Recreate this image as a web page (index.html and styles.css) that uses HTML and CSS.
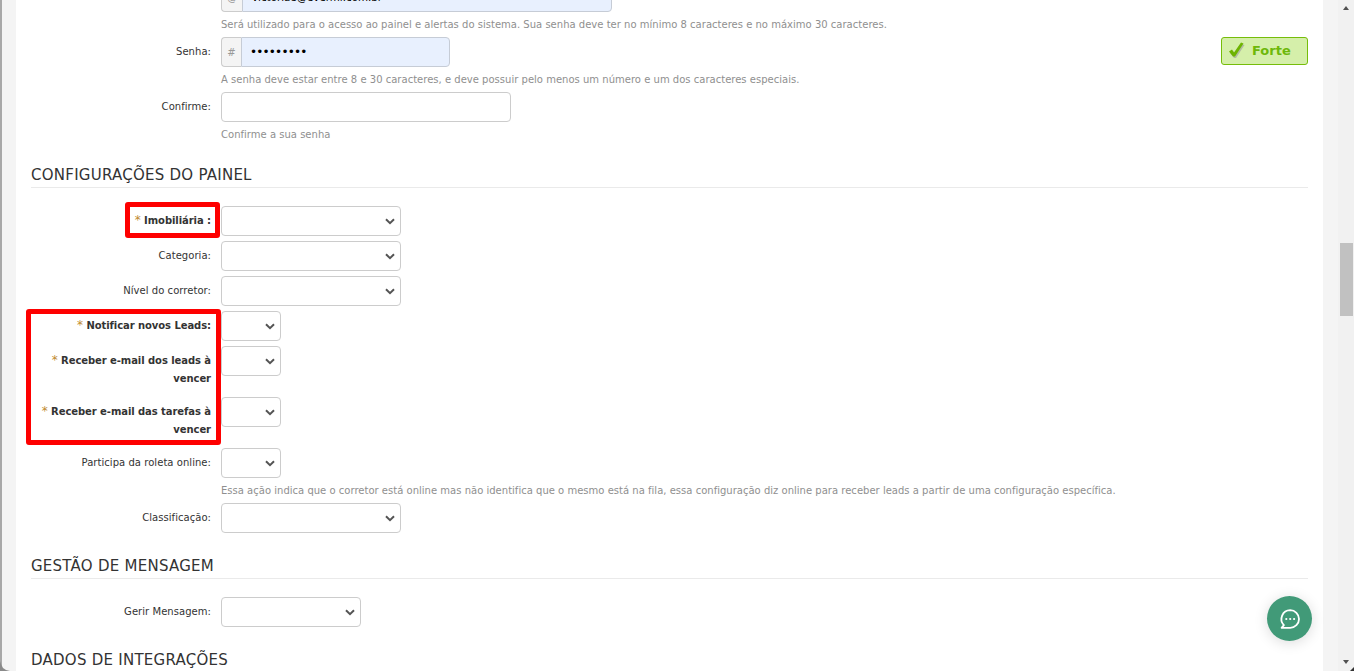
FILE: index.html
```html
<!DOCTYPE html>
<html lang="pt-BR">
<head>
<meta charset="utf-8">
<title>Configurações do corretor</title>
<link rel="stylesheet" href="styles.css">
</head>
<body>
<div class="app">
  <div class="gutter-left"></div>
  <main class="main">
    <form class="form">
      <div class="row">
        <label class="label">E-mail:</label>
        <div class="control">
          <div class="group group-email">
            <span class="addon addon-at">@</span>
            <input class="input input-fill input-email" type="text" value="victoriae@evermi.com.br">
          </div>
          <p class="help">Será utilizado para o acesso ao painel e alertas do sistema. Sua senha deve ter no mínimo 8 caracteres e no máximo 30 caracteres.</p>
        </div>
      </div>
      <div class="row">
        <label class="label">Senha:</label>
        <div class="control">
          <div class="control-line">
            <div class="group group-pass">
              <span class="addon">#</span>
              <input class="input input-fill input-pass" type="password" value="123456789">
            </div>
            <div class="strength">
              <svg class="check" width="18" height="17" viewBox="0 0 18 17"><path class="check-shadow" d="M2 11l3-2 2 3L14 2l2.500 1L8 16H6z"/><path class="check-mark" d="M1 9.500l3-2 2 3L13 .5l2.500 1L7 14.500H5z"/></svg>
              <span>Forte</span>
            </div>
          </div>
          <p class="help">A senha deve estar entre 8 e 30 caracteres, e deve possuir pelo menos um número e um dos caracteres especiais.</p>
        </div>
      </div>
      <div class="row">
        <label class="label">Confirme:</label>
        <div class="control">
          <input class="input input-confirm" type="password">
          <p class="help">Confirme a sua senha</p>
        </div>
      </div>

      <h2 class="heading">CONFIGURAÇÕES DO PAINEL</h2>
      <div class="row">
        <label class="label label-req"><span class="star">*</span> Imobiliária :</label>
        <div class="control"><select class="select select-l"><option></option></select></div>
      </div>
      <div class="row">
        <label class="label">Categoria:</label>
        <div class="control"><select class="select select-l"><option></option></select></div>
      </div>
      <div class="row">
        <label class="label">Nível do corretor:</label>
        <div class="control"><select class="select select-l"><option></option></select></div>
      </div>
      <div class="row">
        <label class="label label-req"><span class="star">*</span> Notificar novos Leads:</label>
        <div class="control"><select class="select select-s"><option></option></select></div>
      </div>
      <div class="row">
        <label class="label label-req"><span class="star">*</span> Receber e-mail dos leads à vencer</label>
        <div class="control"><select class="select select-s"><option></option></select></div>
      </div>
      <div class="row">
        <label class="label label-req"><span class="star">*</span> Receber e-mail das tarefas à vencer</label>
        <div class="control"><select class="select select-s"><option></option></select></div>
      </div>
      <div class="row">
        <label class="label">Participa da roleta online:</label>
        <div class="control">
          <select class="select select-s"><option></option></select>
          <p class="help">Essa ação indica que o corretor está online mas não identifica que o mesmo está na fila, essa configuração diz online para receber leads a partir de uma configuração específica.</p>
        </div>
      </div>
      <div class="row">
        <label class="label">Classificação:</label>
        <div class="control"><select class="select select-l"><option></option></select></div>
      </div>

      <h2 class="heading">GESTÃO DE MENSAGEM</h2>
      <div class="row">
        <label class="label">Gerir Mensagem:</label>
        <div class="control"><select class="select select-m"><option></option></select></div>
      </div>

      <h2 class="heading">DADOS DE INTEGRAÇÕES</h2>
    </form>
  </main>
  <div class="gutter-right"></div>
  <div class="scrollbar">
    <span class="arrow arrow-up"></span>
    <span class="thumb"></span>
    <span class="arrow arrow-down"></span>
  </div>

  <div class="mark mark-one"></div>
  <div class="mark mark-two"></div>

  <button class="chat" type="button" aria-label="Chat">
    <svg width="24" height="24" viewBox="0 0 24 24"><path class="chat-bubble" d="M12.200 3.200a8.800 8.800 0 1 1 0 17.600H3.600l2.300-2.700a8.800 8.800 0 0 1 6.300-14.900z"/><circle class="chat-dot" cx="8.300" cy="12" r="1.100"/><circle class="chat-dot" cx="12.200" cy="12" r="1.100"/><circle class="chat-dot" cx="16.100" cy="12" r="1.100"/></svg>
  </button>
  <svg class="corner corner-l" width="10" height="10" viewBox="0 0 10 10"><path d="M0 0v10h10L6 9 3 7 1 3z"/></svg>
  <svg class="corner corner-r" width="4" height="4" viewBox="0 0 4 4"><path d="M4 0v4H0z"/></svg>
</div>
</body>
</html>
```

FILE: styles.css
```css
* { box-sizing: border-box; }
html, body { margin: 0; height: 100%; overflow: hidden; background: #fff; }
body { font-family: "DejaVu Sans", Verdana, sans-serif; font-size: 10px; color: #333; }

.app { position: relative; display: flex; height: 671px; overflow: hidden; }
.gutter-left { width: 16px; background: #f4f4f4; border-left: 2px solid #a8a8a8; flex: none; }
.main { flex: 1; min-width: 0; padding: 0 15px; background: #fff; }
.gutter-right { width: 15px; background: #f4f4f4; flex: none; }

.scrollbar { position: relative; width: 16px; background: #f1f1f1; flex: none; }
.arrow { position: absolute; left: 5px; width: 0; height: 0; border-left: 3.500px solid transparent; border-right: 3.500px solid transparent; }
.arrow-up { top: 6px; border-bottom: 4px solid #505050; }
.arrow-down { top: 660px; border-top: 4px solid #505050; }
.thumb { position: absolute; left: 2px; top: 243px; width: 13px; height: 73px; background: #c1c1c1; }

.form { margin-top: -18px; }
.row { display: grid; grid-template-columns: 180px 1fr; column-gap: 10px; margin-bottom: 5px; }
.label { padding: 6px 0 4px; line-height: 18px; text-align: right; color: #333; letter-spacing: .05px; }
.label-req { font-weight: 700; letter-spacing: -.07px; }
.star { color: #c08a30; font-weight: 400; font-size: 12px; line-height: 1; }
.control { min-width: 0; }
.control-line { display: flex; justify-content: space-between; align-items: flex-start; }

.help { margin: 5px 0 0; height: 15px; line-height: 15px; color: #8f8f8f; letter-spacing: .015px; white-space: nowrap; }

.group { display: flex; height: 30px; }
.group-email { width: 391px; }
.group-pass { width: 229px; }
.addon { display: flex; align-items: center; justify-content: center; width: 20px; flex: none; background: #f4f4f4; border: 1px solid #ccc; border-right: 0; border-radius: 4px 0 0 4px; color: #999; font-size: 10px; }
.addon-at { width: 21px; }

.input { display: block; height: 30px; padding: 0 9px; border: 1px solid #ccc; border-radius: 4px; background: #fff; color: #000; font: 10.300px "DejaVu Sans", Verdana, sans-serif; outline: 0; }
.input-fill { flex: 1; min-width: 0; background: #e8f0fe; border-color: #c6ccd6; border-radius: 0 4px 4px 0; }
.input-pass { padding-left: 8px; font-size: 12px; letter-spacing: -.8px; }
.input-confirm { width: 290px; }

.select { display: block; height: 30px; padding: 0 4px; border: 1px solid #ccc; border-radius: 4px; appearance: none; -webkit-appearance: none; background: #fff url("data:image/svg+xml,%3Csvg xmlns='http://www.w3.org/2000/svg' width='10' height='7' viewBox='0 0 10 7'%3E%3Cpath d='M1 1.200l4 4 4-4' fill='none' stroke='%23555' stroke-width='2'/%3E%3C/svg%3E") no-repeat right 5px center; font: 10px "DejaVu Sans", Verdana, sans-serif; color: #333; outline: 0; }
.select-l { width: 180px; }
.select-m { width: 140px; }
.select-s { width: 60px; }

.heading { margin: 22px 0 18px; padding: 1px 0 2px; height: 24px; line-height: 20px; border-bottom: 1px solid #eaeaea; font-size: 15px; letter-spacing: .25px; font-weight: 400; color: #333; white-space: nowrap; }

.strength { display: flex; align-items: center; gap: 6px; width: 87px; height: 28px; padding: 0 0 2px 6px; background: #d5efaa; border: 1px solid #76bd0a; border-radius: 3px; color: #6eb80a; font-size: 13px; font-weight: 700; }
.check { flex: none; }
.check-mark { fill: #6db400; }
.check-shadow { fill: #9a9a9a; opacity: .6; }

.mark { position: absolute; border: 5px solid #fe0000; border-radius: 3px; pointer-events: none; }
.mark-one { left: 125px; top: 202px; width: 95px; height: 36px; }
.mark-two { left: 26px; top: 309px; width: 195px; height: 136px; }

.chat { position: absolute; left: 1267px; top: 596px; display: flex; align-items: center; justify-content: center; width: 45px; height: 45px; padding: 0; border: 0; border-radius: 50%; background: #419a78; box-shadow: 0 2px 14px rgba(0,0,0,.14); }
.chat-bubble { fill: none; stroke: #fff; stroke-width: 1.800; stroke-linejoin: round; }
.chat-dot { fill: #fff; }

.corner { position: absolute; bottom: 0; fill: #8a8a8a; }
.corner-l { left: 0; }
.corner-r { right: 0; fill: #333; }
```
